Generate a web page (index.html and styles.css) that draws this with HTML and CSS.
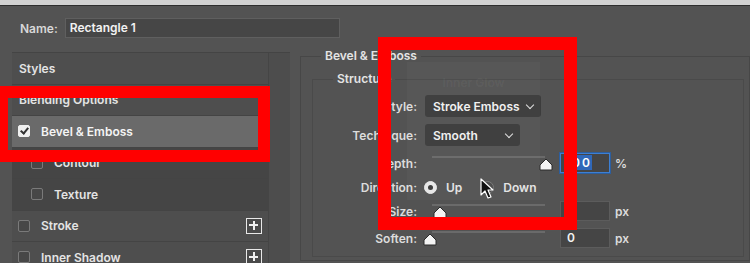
FILE: index.html
```html
<!DOCTYPE html>
<html lang="en">

<head>
    <meta charset="UTF-8">
    <meta name="viewport" content="width=device-width, initial-scale=1.0">
    <title>Layer Style</title>
    <link rel="stylesheet" href="styles.css">
</head>

<body>

    <div class="topbar"></div>

    <div class="namebar">
        <label for="layer-name">Name:</label>
        <div class="name-input" id="layer-name">Rectangle 1</div>
    </div>

    <div class="main">
        <div class="styles-panel">
            <div class="styles-list">
                <div class="row row-head">Styles</div>
                <div class="row row-head">Blending Options</div>
                <div class="row row-selected"><span class="check checked"></span>Bevel &amp; Emboss</div>
                <div class="row row-sub"><span class="check"></span>Contour</div>
                <div class="row row-sub"><span class="check"></span>Texture</div>
                <div class="row"><span class="check"></span>Stroke<span class="plus"></span></div>
                <div class="row"><span class="check"></span>Inner Shadow<span class="plus"></span></div>
            </div>
            <div class="scroll-col"></div>
        </div>

        <fieldset class="group">
            <legend>Bevel &amp; Emboss</legend>
            <fieldset class="group inner">
                <legend>Structure</legend>

                <div class="field f-style">
                    <span class="lbl">Style:</span>
                    <div class="select sel-style">Stroke Emboss<span class="chev"></span></div>
                </div>

                <div class="field f-tech">
                    <span class="lbl">Technique:</span>
                    <div class="select sel-tech">Smooth<span class="chev"></span></div>
                </div>

                <div class="field f-depth">
                    <span class="lbl">Depth:</span>
                    <div class="slider">
                        <div class="track"></div>
                        <svg class="thumb" style="left: 107px" viewBox="0 0 14 13"><path d="M7 1 L13 7 L13 12 L1 12 L1 7 Z" fill="#f4f4f4" stroke="#2a2a2a" stroke-width="1" stroke-linejoin="round"/></svg>
                    </div>
                    <div class="num num-active"><span class="sel-text">100</span></div>
                    <span class="unit">%</span>
                </div>

                <div class="field f-dir">
                    <span class="lbl">Direction:</span>
                    <span class="radio on"></span><span class="opt">Up</span>
                    <span class="radio down"></span><span class="opt">Down</span>
                </div>

                <div class="field f-size">
                    <span class="lbl">Size:</span>
                    <div class="slider">
                        <div class="track"></div>
                        <svg class="thumb" style="left: 1px" viewBox="0 0 14 13"><path d="M7 1 L13 7 L13 12 L1 12 L1 7 Z" fill="#f4f4f4" stroke="#2a2a2a" stroke-width="1" stroke-linejoin="round"/></svg>
                    </div>
                    <div class="num num-size">5</div>
                    <span class="unit">px</span>
                </div>

                <div class="field f-soften">
                    <span class="lbl">Soften:</span>
                    <div class="slider">
                        <div class="track"></div>
                        <svg class="thumb" style="left: -9px" viewBox="0 0 14 13"><path d="M7 1 L13 7 L13 12 L1 12 L1 7 Z" fill="#f4f4f4" stroke="#2a2a2a" stroke-width="1" stroke-linejoin="round"/></svg>
                    </div>
                    <div class="num">0</div>
                    <span class="unit">px</span>
                </div>
            </fieldset>
        </fieldset>
    </div>

    <!-- faded drag ghost of the Inner Glow row -->
    <div class="ghost"><span>Inner Glow</span></div>

    <svg class="cursor" viewBox="0 0 14 22">
        <path d="M1 1 L1 17 L5 13 L8 20 L11 19 L8 12 L13 12 Z" fill="#111" stroke="#fff" stroke-width="1.2" stroke-linejoin="round"/>
    </svg>

    <!-- red highlight boxes from the tutorial -->
    <div class="mark mark-left"></div>
    <div class="mark mark-right"></div>

</body>

</html>
```

FILE: styles.css
```css
body {
    margin: 0;
    width: 750px;
    height: 263px;
    overflow: hidden;
    position: relative;
    background-color: #535353;
    color: #e2e2e2;
    font-family: Inter, 'Open Sans', sans-serif;
    font-size: 12px;
    font-weight: 600;
}

.topbar {
    height: 5px;
    background-color: #d2d2d2;
    border-bottom: 1px solid #2e2e2e;
}

.namebar {
    display: flex;
    align-items: center;
    padding: 12px 0 0 20px;
    height: 20px;
}

.namebar label {
    color: #d8d8d8;
    margin-right: 7px;
}

.name-input {
    box-sizing: border-box;
    width: 275px;
    height: 20px;
    line-height: 18px;
    padding-left: 4px;
    background-color: #464646;
    border: 1px solid #5f5f5f;
    color: #f2f2f2;
}

.main {
    display: flex;
    align-items: flex-start;
    margin-top: 14px;
    padding-left: 12px;
}

/* left list */

.styles-panel {
    display: flex;
    border-top: 1px solid #444;
}

.styles-list {
    width: 256px;
}

.scroll-col {
    width: 21px;
    height: 220px;
    background-color: #4d4d4d;
    border-left: 1px solid #454545;
}

.row {
    display: flex;
    align-items: center;
    height: 30.5px;
    padding-left: 6px;
    background-color: #4e4e4e;
    border-bottom: 1px solid #444;
    color: #e4e4e4;
}

.row-head {
    padding-left: 7px;
}

.row-selected {
    background-color: #6a6a6a;
    color: #f4f4f4;
}

.row-sub {
    background-color: #454545;
    padding-left: 19px;
}

.check {
    box-sizing: border-box;
    width: 12px;
    height: 12px;
    margin-right: 11px;
    border: 1px solid #7a7a7a;
    border-radius: 2px;
    background-color: #474747;
}

.check.checked {
    background-color: #f0f0f0;
    border-color: #f0f0f0;
    position: relative;
}

.check.checked::after {
    content: '';
    position: absolute;
    left: 3px;
    top: 0px;
    width: 3px;
    height: 6px;
    border: solid #333;
    border-width: 0 2px 2px 0;
    transform: rotate(40deg);
}

.plus {
    position: relative;
    box-sizing: border-box;
    width: 16px;
    height: 16px;
    margin-left: auto;
    margin-right: 6px;
    border: 1.5px solid #e8e8e8;
    background-color: #4a4a4a;
}

.plus::before,
.plus::after {
    content: '';
    position: absolute;
    background-color: #f0f0f0;
}

.plus::before {
    left: 2px;
    top: 5.5px;
    width: 9px;
    height: 2px;
}

.plus::after {
    left: 5.5px;
    top: 2px;
    width: 2px;
    height: 9px;
}

/* right groups */

.group {
    margin: -3px 0 0 10px;
    padding: 9px 0 3px 11px;
    width: 460px;
    border: 1px solid #474747;
    min-width: 0;
}

.group legend {
    margin-left: 9px;
    padding: 0 4px;
    line-height: 14px;
    color: #e4e4e4;
}

.group.inner {
    margin: 0;
    padding: 9px 0 7px 0;
    width: 430px;
    border-color: #4a4a4a;
}

.group.inner legend {
    margin-left: 20px;
}

.field {
    display: flex;
    align-items: center;
    height: 22px;
}

.f-tech { margin-top: 7px; }
.f-depth { margin-top: 6px; }
.f-dir { margin-top: 2px; }
.f-size { margin-top: 2px; }
.f-soften { margin-top: 5px; }

.lbl {
    width: 104px;
    margin-right: 8px;
    text-align: right;
    color: #dcdcdc;
}

.select {
    box-sizing: border-box;
    display: flex;
    align-items: center;
    height: 22px;
    padding: 0 8px;
    background-color: #3c3c3c;
    border-radius: 3px;
    color: #f0f0f0;
}

.sel-style { width: 116px; }
.sel-tech { width: 95px; }

.chev {
    width: 5px;
    height: 5px;
    margin: -3px 0 0 auto;
    border: solid #e0e0e0;
    border-width: 0 1.5px 1.5px 0;
    transform: rotate(45deg);
}

.slider {
    position: relative;
    width: 113px;
    height: 22px;
    margin-left: 7px;
    margin-right: 15px;
}

.track {
    margin-top: 4px;
    height: 2px;
    background-color: #6a6a6a;
}

.thumb {
    position: absolute;
    top: 6px;
    width: 14px;
    height: 13px;
}

.num {
    box-sizing: border-box;
    width: 50px;
    height: 20px;
    line-height: 18px;
    padding-left: 6px;
    background-color: #454545;
    border: 1px solid #5c5c5c;
    color: #f2f2f2;
}

.num-active {
    padding-left: 4px;
    border-color: #3d7fd3;
    box-shadow: 0 0 0 1px #2c5e9e;
    letter-spacing: 2px;
}

.num-size {
    padding-left: 3px;
}

.sel-text {
    background-color: #3068b8;
    color: #fff;
}

.unit {
    margin-left: 5px;
    color: #dcdcdc;
}

.radio {
    position: relative;
    box-sizing: border-box;
    width: 13px;
    height: 13px;
    border-radius: 50%;
    border: 1px solid #777;
    background-color: #4a4a4a;
}

.radio.on {
    margin-left: -1px;
    background-color: #e8e8e8;
    border-color: #e8e8e8;
}

.radio.on::after {
    content: '';
    position: absolute;
    left: 3px;
    top: 3px;
    width: 5px;
    height: 5px;
    border-radius: 50%;
    background-color: #3a3a3a;
}

.radio.down {
    margin-left: 19px;
}

.opt {
    margin-left: 9px;
    color: #e4e4e4;
}

/* overlay bits */

.ghost {
    position: absolute;
    left: 407px;
    top: 62px;
    width: 133px;
    height: 138px;
    background-color: rgba(255, 255, 255, 0.025);
    text-align: center;
}

.ghost span {
    display: block;
    margin-top: 13px;
    color: rgba(255, 255, 255, 0.05);
}

.cursor {
    position: absolute;
    left: 480px;
    top: 178px;
    width: 14px;
    height: 22px;
}

.mark {
    position: absolute;
    box-sizing: border-box;
    border: 12px solid #ff0000;
}

.mark-left {
    left: -4px;
    top: 86px;
    width: 274px;
    height: 76px;
}

.mark-right {
    left: 378px;
    top: 37px;
    width: 199px;
    height: 193px;
    border-width: 13px;
}
```
